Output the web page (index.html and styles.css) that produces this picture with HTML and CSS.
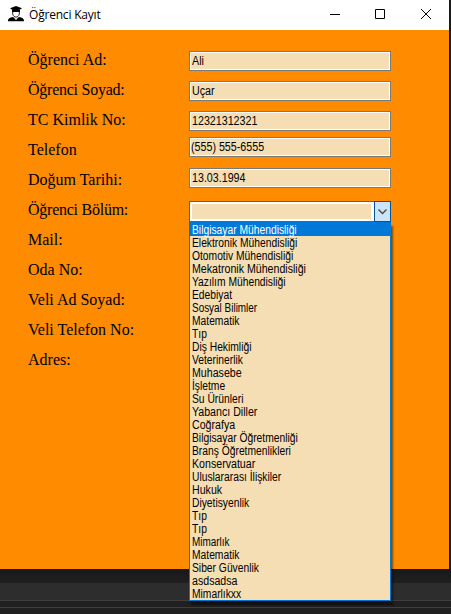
FILE: index.html
```html
<!DOCTYPE html>
<html lang="tr">
<head>
<meta charset="utf-8">
<title>Öğrenci Kayıt</title>
<link rel="stylesheet" href="styles.css">
</head>
<body>
<main class="window">
  <header class="titlebar">
    <svg class="app-icon" viewBox="0 0 16 16" width="16" height="16">
      <path d="M2 2.200 8 0l6 2.200-2.500 1.700v1.500h-7V3.900z"/>
      <path d="M4.700 5.500v2.600c.5 2 2 3 3.300 3s2.800-1 3.300-3V5.500" fill="#fff" stroke="#222" stroke-width="1"/>
      <path d="M4 4.100h8v1.900H4z"/>
      <path d="M0 15.200c0-3 2-3.700 5-4.200l3 2 3-2c3 .5 5 1.200 5 4.200z"/>
      <path d="M6.300 12.300h3.400L8 14z" fill="#fff"/>
    </svg>
    <h1 class="title">Öğrenci Kayıt</h1>
    <div class="controls">
      <svg viewBox="0 0 46 30" width="46" height="30"><path d="M7 14.500h10"/></svg>
      <svg viewBox="0 0 46 30" width="46" height="30"><path d="M6.500 9.500h9v9h-9z"/></svg>
      <svg viewBox="0 0 46 30" width="46" height="30"><path d="M6 9l10 10M16 9 6 19"/></svg>
    </div>
  </header>
  <section class="form">
    <div class="labels">
      <label>Öğrenci Ad:</label>
      <label class="tight">Öğrenci Soyad:</label>
      <label>TC Kimlik No:</label>
      <label>Telefon</label>
      <label>Doğum Tarihi:</label>
      <label class="tight">Öğrenci Bölüm:</label>
      <label>Mail:</label>
      <label>Oda No:</label>
      <label>Veli Ad Soyad:</label>
      <label>Veli Telefon No:</label>
      <label>Adres:</label>
    </div>
    <div class="fields">
      <div class="field"><span>Ali</span></div>
      <div class="field"><span>Uçar</span></div>
      <div class="field"><span>12321312321</span></div>
      <div class="field masked"><span>(555) 555-6555</span></div>
      <div class="field date"><span>13.03.1994</span></div>
      <div class="combo">
        <div class="combo-value"></div>
        <div class="combo-button"><svg viewBox="0 0 15 19" width="15" height="19"><path d="M3.500 7.500 7.500 11.500 11.500 7.500"/></svg></div>
        <ul class="menu">
          <li class="selected"><span>Bilgisayar Mühendisliği</span></li>
          <li><span>Elektronik Mühendisliği</span></li>
          <li><span>Otomotiv Mühendisliği</span></li>
          <li class="wide"><span>Mekatronik Mühendisliği</span></li>
          <li><span>Yazılım Mühendisliği</span></li>
          <li><span>Edebiyat</span></li>
          <li class="narrow"><span>Sosyal Bilimler</span></li>
          <li><span>Matematik</span></li>
          <li><span>Tıp</span></li>
          <li><span>Diş Hekimliği</span></li>
          <li><span>Veterinerlik</span></li>
          <li class="wide"><span>Muhasebe</span></li>
          <li><span>İşletme</span></li>
          <li><span>Su Ürünleri</span></li>
          <li class="wide"><span>Yabancı Diller</span></li>
          <li class="wide"><span>Coğrafya</span></li>
          <li><span>Bilgisayar Öğretmenliği</span></li>
          <li><span>Branş Öğretmenlikleri</span></li>
          <li class="wide"><span>Konservatuar</span></li>
          <li><span>Uluslararası İlişkiler</span></li>
          <li class="wide"><span>Hukuk</span></li>
          <li><span>Diyetisyenlik</span></li>
          <li><span>Tıp</span></li>
          <li><span>Tıp</span></li>
          <li class="narrow"><span>Mimarlık</span></li>
          <li><span>Matematik</span></li>
          <li><span>Siber Güvenlik</span></li>
          <li class="wide"><span>asdsadsa</span></li>
          <li><span>Mimarlıkxx</span></li>
        </ul>
      </div>
    </div>
  </section>
</main>
<footer class="backdrop"><div class="band"></div><div class="line"></div></footer>
</body>
</html>
```
FILE: styles.css
```css
* { box-sizing: border-box; }
body {
  margin: 0;
  width: 451px;
  height: 614px;
  overflow: hidden;
  background: #1a1a1c;
  font: 12.5px/13px "Liberation Sans", Arial, sans-serif;
  color: #000;
}
.window { width: 449px; height: 569px; background: #ff8c00; }
.titlebar { display: flex; align-items: center; height: 30px; padding-left: 8px; background: #fff; }
.app-icon { margin-top: -2px; }
.title { margin: 0 0 0 5px; font: 12px/16px "Open Sans", sans-serif; letter-spacing: -0.2px; white-space: nowrap; }
.controls { display: flex; margin-left: auto; width: 126px; }
.controls svg { flex: none; fill: none; stroke: #000; }
.form { display: flex; padding: 15px 0 0 28px; }
.labels { width: 161px; flex: none; }
.labels label { display: block; height: 30px; font: 16px/30px "Liberation Serif", serif; white-space: nowrap; }
.labels .tight { letter-spacing: -0.25px; }
.fields { width: 202px; padding-top: 6px; }
.field {
  height: 20px;
  margin-bottom: 10px;
  padding: 3px 2px;
  border: 1px solid #7a7a7a;
  box-shadow: inset 0 0 0 1px #fff;
  background: #f5deb3;
}
.field span, .menu span { display: block; width: max-content; transform: scaleX(.855); transform-origin: 0 0; }
.field:nth-child(3) { margin-bottom: 6px; }
.field.masked { margin-bottom: 11px; padding-left: 1px; }
.field.date { margin-bottom: 13px; }
.combo { position: relative; display: flex; height: 21px; border: 1px solid #0078d7; border-right: 0; background: #fff; }
.combo-value { flex: 1; margin: 2px 3px 2px 2px; background: #f5deb3; }
.combo-button { width: 17px; margin-top: -1px; height: 21px; border: 1px solid #005499; background: #cce4f7; }
.combo-button svg { display: block; fill: none; stroke: #444; stroke-width: 1.3; }
.menu {
  position: absolute;
  left: -1px;
  top: 20px;
  width: 202px;
  margin: 0;
  padding: 0;
  list-style: none;
  border: 1px solid #0078d7;
  background: #f5deb3;
  box-shadow: 2px 4px 2px rgba(0, 0, 0, .5);
}
.menu li { height: 13px; padding-left: 2px; line-height: 15px; white-space: nowrap; }
.menu span { transform: scaleX(.823); }
.menu .wide span { transform: scaleX(.85); }
.menu .narrow span { transform: scaleX(.795); }
.menu .selected { background: #0078d7; color: #fff; }
.backdrop { height: 45px; padding-top: 14px; background: linear-gradient(#181818, #202020 14px); }
.band { height: 18px; background: #2d2d2d; border-bottom: 1px solid #3f3f3f; }
.line { margin-top: 6px; height: 1px; background: #3f3f3f; }
```
